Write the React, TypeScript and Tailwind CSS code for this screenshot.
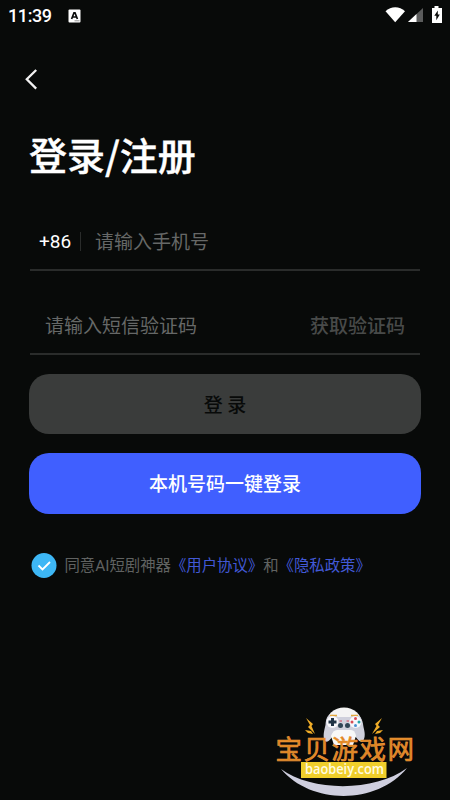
import { useState } from 'react';

function StatusBar() {
    return (
        <div className="flex h-8 items-center justify-between pl-2 pr-[8px] text-white">
            <div className="flex items-center">
                <span className="w-[45px] whitespace-nowrap font-['Roboto'] text-[18px] font-medium leading-none tracking-[-0.4px]">11:39</span>
                <svg className="ml-[15px] -mt-px" width="13" height="14" viewBox="0 0 13 14">
                    <rect x="0.5" y="0.5" width="12" height="13" rx="1" fill="#fff" />
                    <path d="M3.6 10 6 3.8h1L9.4 10M4.8 8h3.4" fill="none" stroke="#0a0c0b" strokeWidth="1.7" />
                    <path d="M6.5 11.8h5" stroke="#777" strokeWidth="0.8" />
                </svg>
            </div>
            <svg className="-mt-[3px]" width="57" height="18" viewBox="0 0 57 18" fill="#fff">
                <path d="M0.500 5.200C6-0.200 14.500-0.200 20 5.200L10.200 16.200Z" />
                <path d="M38 2v14H23Z" fill="#5b5c5c" />
                <path d="M31.500 8v8H23Z" />
                <path d="M49.500 0h4v2h3.500v15h-10V2h2.500Z" />
                <path d="M52.800 4.500 49.300 9.800h2v4.400l3.500-5.700h-2Z" fill="#0a0c0b" />
            </svg>
        </div>
    );
}

function SiteBadge() {
    return (
        <svg className="absolute left-[265px] top-[695px]" width="160" height="105" viewBox="0 0 160 105">
            <path d="M16 74C47 97 110 97 142 73C112 110 46 110 16 74Z" fill="#cfcfdf" />
            {/* controller */}
            <ellipse cx="79" cy="29" rx="18" ry="16.500" fill="#f4f4f4" />
            <path d="M66 20C69 19 71 21 73 22h12C87 21 90 19 92 20C97 21 98 28 98.500 32C100 38 100.500 42 98 46C95 49 92 43 89 40H69C66 43 63 49 60 46C57.500 42 59 36 60.500 30C61 24 62 20 66 20Z" fill="#cfd0dc" />
            <path d="M66 41Q68 35 72 35H86Q90 35 91 41L88 50H69Z" fill="#f8f8f8" />
            <path d="M65 20.500h7M86 20.500h7" stroke="#e3a83c" strokeWidth="1.500" />
            <circle cx="67.500" cy="27" r="6" fill="#f7f7fb" />
            <path d="M67.500 23v8M63.500 27h8" stroke="#203346" strokeWidth="3" />
            <circle cx="90.500" cy="27" r="6" fill="#f7f7fb" />
            <circle cx="90.500" cy="23.500" r="1.500" fill="#d84b54" />
            <circle cx="90.500" cy="30.500" r="1.500" fill="#4b8ed0" />
            <circle cx="87" cy="27" r="1.500" fill="#d84b54" />
            <circle cx="94" cy="27" r="1.500" fill="#25a4a7" />
            <path d="M74.500 26h2.500M81.500 26h2.500" stroke="#d1455b" strokeWidth="1.200" />
            <circle cx="75.500" cy="30.500" r="2.500" fill="#2f4556" />
            <circle cx="82.500" cy="30.500" r="2.500" fill="#2f4556" />
            {/* sparks */}
            <path d="M41 23 48 29 46.500 31 50 39 43 32 45 30ZM40 35l6 1 2 3-5-1ZM117 23 110 29 111.500 31 107 39 115 32 113 30ZM118 35l-6 1-2 3 5-1Z" fill="#f0ad28" />
            <text
                x="10.5"
                y="63.5"
                textLength="138.500"
                className="font-['Noto_Sans_CJK_SC',sans-serif] text-[26.500px]"
                fill="#e08420"
                stroke="#e9963c"
                strokeWidth="0.6"
            >
                宝贝游戏网
            </text>
            <rect x="36" y="67" width="85.500" height="16" fill="#efce2b" />
            <text
                x="40"
                y="79"
                textLength="79"
                lengthAdjust="spacingAndGlyphs"
                className="font-['Open_Sans',sans-serif] text-[15px] font-semibold"
                fill="#fffbe0"
            >
                baobeiy.com
            </text>
        </svg>
    );
}

export default function App() {
    const [phone, setPhone] = useState('');
    const [code, setCode] = useState('');
    const [agreed, setAgreed] = useState(true);

    return (
        <div className="relative h-[800px] w-[450px] overflow-hidden bg-[#080a09] font-['Noto_Sans_CJK_SC',sans-serif] text-[19px] text-white">
            <StatusBar />

            <button className="ml-6 mt-9 block" aria-label="返回">
                <svg width="14" height="22" viewBox="0 0 14 22" fill="none" stroke="#f2f2f2" strokeWidth="2.3">
                    <path d="M12.200 2 2.800 11.300 12.200 20.600" />
                </svg>
            </button>

            <div className="px-[29px]">
                <h1 className="mt-[36px] h-[56px] text-[38px] font-medium leading-[56px] [-webkit-text-stroke:0.4px]">登录/注册</h1>

                <div className="mx-px mt-[30px] flex h-[59px] items-center border-b-2 border-[#2a2c2b] pt-px">
                    <span className="w-[50px] pl-[9px] pt-[3px] font-['Roboto'] text-[19px]">+86</span>
                    <span className="h-[19px] w-px bg-[#2a2c2b]" />
                    <input
                        type="tel"
                        value={phone}
                        onChange={(e) => setPhone(e.target.value)}
                        placeholder="请输入手机号"
                        className="ml-[14px] w-60 bg-transparent placeholder-[#666867] outline-none"
                    />
                </div>

                <div className="mx-px mt-[25px] flex h-[59px] items-center justify-between border-b-2 border-[#2a2c2b] px-[15px] pt-[2px]">
                    <input
                        value={code}
                        onChange={(e) => setCode(e.target.value)}
                        placeholder="请输入短信验证码"
                        className="w-52 bg-transparent placeholder-[#666867] outline-none"
                    />
                    <button className="whitespace-nowrap font-medium text-[#484a49]">获取验证码</button>
                </div>

                <button className="mt-[19px] block h-[60px] w-full rounded-[20px] bg-[#3a3c3b] pt-px font-medium text-[#080a09]">
                    登 录
                </button>
                <button className="mt-[19px] block h-[61px] w-full rounded-[20px] bg-[#405fff] font-medium">
                    本机号码一键登录
                </button>

                <div className="mt-[38px] flex h-7 items-center whitespace-nowrap pl-[2px] text-[15.380px] text-[#606261]">
                    <button className="mr-[7.500px] shrink-0" onClick={() => setAgreed(!agreed)} aria-label="同意">
                        <svg width="26" height="26" viewBox="0 0 26 26" fill="none">
                            <circle cx="13" cy="12.500" r="12.500" fill={agreed ? '#3db7f5' : '#3a3c3b'} />
                            {agreed && <path d="m7.500 12.500 4 4 7.500-7.500" stroke="#fff" strokeWidth="1.800" />}
                        </svg>
                    </button>
                    <div className="flex">
                        <span>
                            同意<span className="font-['Roboto']">AI</span>短剧神器
                        </span>
                        <a className="text-[#4259d6]">《用户协议》</a>
                        <span>和</span>
                        <a className="text-[#4259d6]">《隐私政策》</a>
                    </div>
                </div>
            </div>

            <SiteBadge />
        </div>
    );
}
